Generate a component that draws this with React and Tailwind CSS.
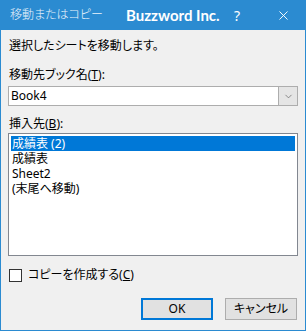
import { ChevronDown, X } from 'lucide-react';

function App() {
  const rows = ['成績表 (2)', '成績表', 'Sheet2', '(末尾へ移動)'];

  return (
    <div className="w-[306px] h-[331px] bg-[#2b8bd1] flex flex-col text-[12px] text-black font-['Noto_Sans','Noto_Sans_CJK_JP',sans-serif] [font-feature-settings:'palt']">
      {/* Title bar */}
      <div className="h-[30px] flex items-center text-white shrink-0 whitespace-nowrap">
        <span className="pl-[10px] w-[126px] text-[12px] font-light text-[#eaf3fb]">移動またはコピー</span>
        <span className="w-[108px] text-[15px] font-bold leading-[20px] font-['Lato',sans-serif]">Buzzword Inc.</span>
        <span className="w-[42px] text-[14px]">?</span>
        <X className="w-[15px] h-[15px]" strokeWidth={1.5} />
      </div>

      {/* Body */}
      <div className="flex-1 mx-[1px] mb-[1px] bg-[#f0f0f0] px-[7px] flex flex-col">
        <div className="mt-[8px] h-[16px] leading-[16px] pl-[1px]">選択したシートを移動します。</div>

        <div className="mt-[13px] h-[16px] leading-[16px] pl-[1px]">
          移動先ブック名(<span className="underline">T</span>):
        </div>
        <div className="mt-[3px] h-[20px] bg-white border border-[#adadad] flex items-stretch">
          <div className="flex-1 pl-[2px] leading-[18px]">Book4</div>
          <div className="w-[19px] bg-[#e5e5e5] border-l border-[#adadad] flex items-center justify-center">
            <ChevronDown className="w-[11px] h-[11px] text-[#606060]" strokeWidth={1.5} />
          </div>
        </div>

        <div className="mt-[10px] h-[16px] leading-[16px] pl-[1px]">
          挿入先(<span className="underline">B</span>):
        </div>
        <div className="mt-[1px] h-[123px] bg-white border border-[#828790] p-[2px] flex flex-col">
          {rows.map((r, i) => (
            <div
              key={r}
              className={
                i === 0
                  ? 'h-[15px] leading-[15px] pl-[1px] bg-[#0078d7] text-white overflow-hidden'
                  : 'h-[15px] leading-[15px] pl-[1px] overflow-hidden'
              }
            >
              {r}
            </div>
          ))}
        </div>

        <div className="mt-[11px] h-[16px] flex items-center pl-[1px]">
          <div className="w-[13px] h-[13px] border border-[#333333] bg-white" />
          <span className="ml-[6px] leading-[16px]">
            コピーを作成する(<span className="underline">C</span>)
          </span>
        </div>

        <div className="mt-[15px] flex justify-end gap-[12px] pr-[1px]">
          <button className="w-[72px] h-[22px] bg-[#e1e1e1] border-2 border-[#0078d7] text-[12px] leading-none">
            OK
          </button>
          <button className="w-[72px] h-[22px] bg-[#e1e1e1] border border-[#adadad] text-[12px] leading-none">
            キャンセル
          </button>
        </div>
      </div>
    </div>
  );
}

export default App;
